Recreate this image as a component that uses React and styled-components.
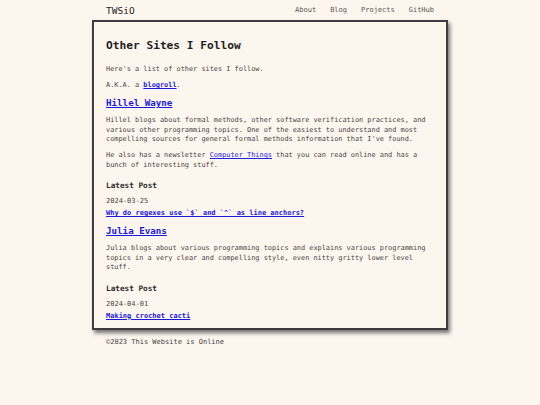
import { createGlobalStyle, styled } from 'styled-components';

const Global = createGlobalStyle`
  html, body {
    margin: 0;
    padding: 0;
    background: #fdf6ef;
  }
  body {
    font-family: "DejaVu Sans Mono", "Liberation Mono", monospace;
    color: #3a3a3a;
  }
`;

const Page = styled.div`
  width: 356px;
  margin: 0 auto;
`;

const Header = styled.header`
  display: flex;
  align-items: center;
  justify-content: space-between;
  height: 20px;
  padding: 0 14px;
`;

const Brand = styled.span`
  font-size: 9.5px;
  color: #222;
`;

const Nav = styled.nav`
  display: flex;
  gap: 14px;
  font-size: 7px;
  color: #555;
`;

const Card = styled.main`
  border: 2px solid #3d3d3d;
  background: #fdf6ef;
  box-shadow: 2px 3px 4px rgba(0, 0, 0, 0.55);
  padding: 17px 12px 0;
`;

const Title = styled.h1`
  font-size: 11.2px;
  line-height: 14px;
  margin: 0 0 12px;
  color: #222;
`;

const Text = styled.p`
  font-size: 6.9px;
  line-height: 9.5px;
  margin: 0 0 6.5px;
  color: #444;
`;

const Link = styled.a`
  color: ${({ $bold }) => ($bold ? '#1a1ad6' : '#2222dd')};
  font-weight: ${({ $bold }) => ($bold ? 700 : 400)};
  text-decoration: underline;
`;

const SiteName = styled.h2`
  font-size: 9.2px;
  line-height: 12px;
  margin: 0 0 7px;
  a {
    color: #1a1ad6;
    font-weight: 700;
  }
`;

const SubHead = styled.h3`
  font-size: 7.7px;
  line-height: 10px;
  margin: 11px 0 6px;
  color: #2a2a2a;
`;

const PostDate = styled.p`
  font-size: 7px;
  line-height: 9px;
  margin: 0 0 3px;
  color: #444;
`;

const PostLink = styled.p`
  font-size: 7px;
  line-height: 9px;
  margin: 0 0 7px;
`;

const Footer = styled.footer`
  padding: 8px 14px;
  font-size: 7px;
  color: #444;
`;

const sites = [
  {
    name: 'Hillel Wayne',
    body: [
      "Hillel blogs about formal methods, other software verification practices, and various other programming topics. One of the easiest to understand and most compelling sources for general formal methods information that I've found.",
      <>
        He also has a newsletter <Link href="#">Computer Things</Link> that you can read online and has a bunch of interesting stuff.
      </>,
    ],
    date: '2024-03-25',
    post: 'Why do regexes use `$` and `^` as line anchors?',
  },
  {
    name: 'Julia Evans',
    body: [
      'Julia blogs about various programming topics and explains various programming topics in a very clear and compelling style, even nitty gritty lower level stuff.',
    ],
    date: '2024-04-01',
    post: 'Making crochet cacti',
  },
];

export default function App() {
  return (
    <>
      <Global />
      <Page>
        <Header>
          <Brand>TWSiO</Brand>
          <Nav>
            <span>About</span>
            <span>Blog</span>
            <span>Projects</span>
            <span>GitHub</span>
          </Nav>
        </Header>
        <Card>
          <Title>Other Sites I Follow</Title>
          <Text>Here's a list of other sites I follow.</Text>
          <Text>
            A.K.A. a <Link href="#" $bold>blogroll</Link>.
          </Text>
          {sites.map((s) => (
            <section key={s.name}>
              <SiteName>
                <a href="#">{s.name}</a>
              </SiteName>
              {s.body.map((b, i) => (
                <Text key={i}>{b}</Text>
              ))}
              <SubHead>Latest Post</SubHead>
              <PostDate>{s.date}</PostDate>
              <PostLink>
                <Link href="#" $bold>{s.post}</Link>
              </PostLink>
            </section>
          ))}
        </Card>
        <Footer>©2023 This Website is Online</Footer>
      </Page>
    </>
  );
}
